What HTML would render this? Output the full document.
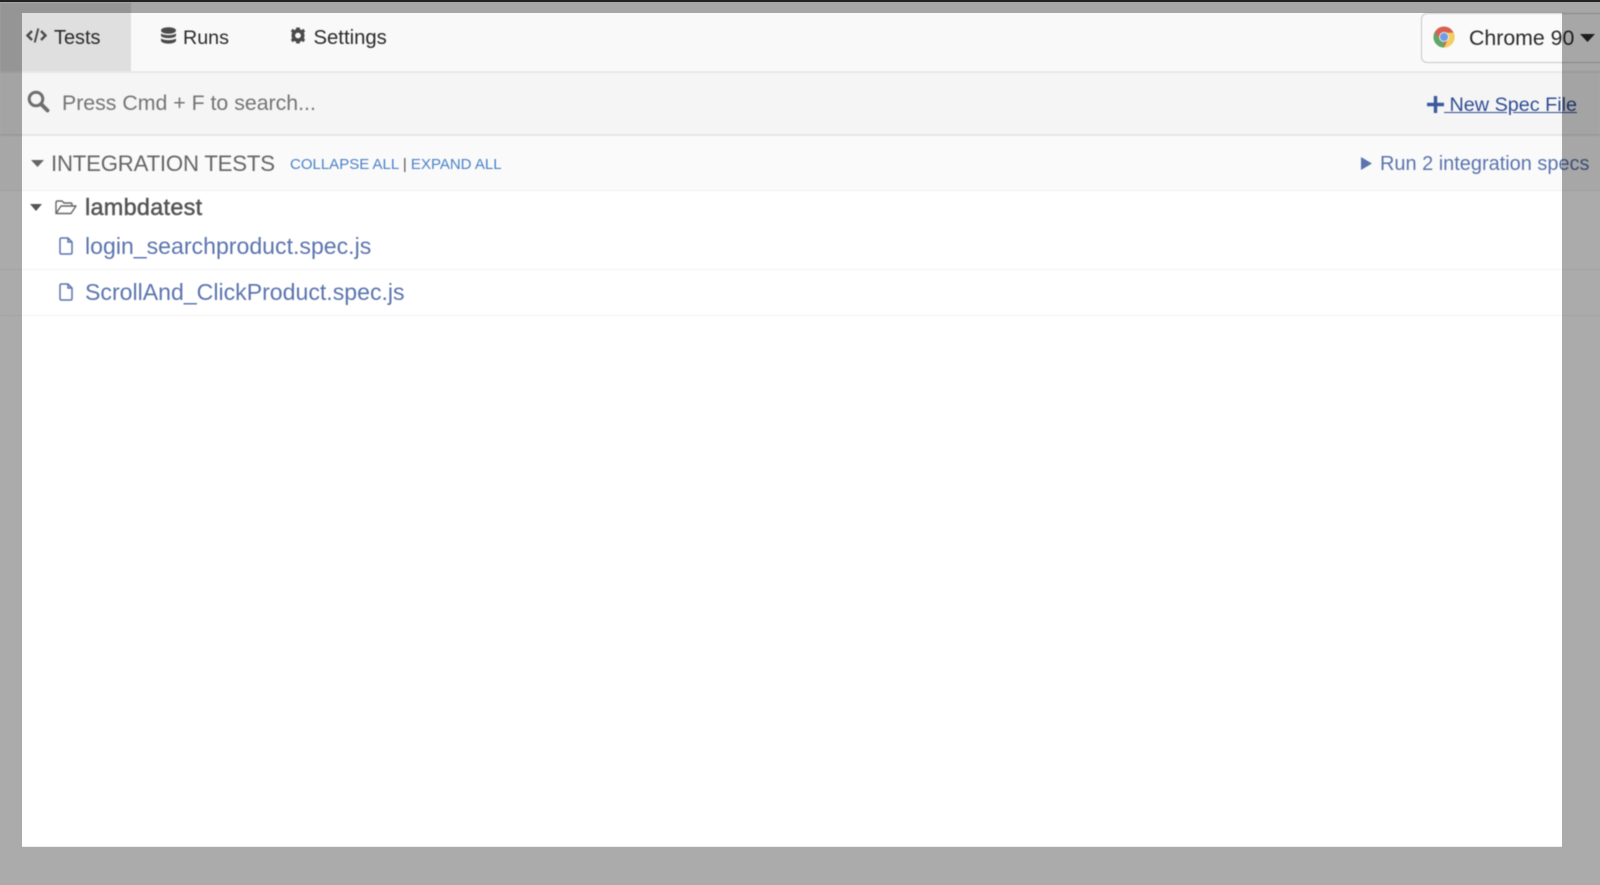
<!DOCTYPE html>
<html><head><meta charset="utf-8"><style>
html,body{margin:0;padding:0;width:1600px;height:885px;overflow:hidden;background:#fff;font-family:"Liberation Sans",sans-serif}
.a{position:absolute;white-space:nowrap;line-height:1}
svg{position:absolute;display:block}
.ov{position:absolute;background:#000;opacity:.33}
#c{position:absolute;left:0;top:0;width:1600px;height:885px;filter:blur(.4px)}
</style></head><body>
<div id="c">
<div class="a" style="left:0;top:0;width:1600px;height:73px;background:#f9f9f9"></div>
<div class="a" style="left:0;top:71px;width:1600px;height:2px;background:#e8e8e8"></div>
<div class="a" style="left:0;top:3px;width:131px;height:68px;background:#dfdfdf"></div>
<div class="a" style="left:0;top:73px;width:1600px;height:61px;background:#f5f5f5"></div>
<div class="a" style="left:0;top:134px;width:1600px;height:2px;background:#e6e6e6"></div>
<div class="a" style="left:0;top:136px;width:1600px;height:54px;background:#fafafa"></div>
<div class="a" style="left:0;top:190px;width:1600px;height:1px;background:#f0f0f0"></div>
<div class="a" style="left:0;top:269px;width:1600px;height:0;border-top:1px dotted #e6e6e6"></div>
<div class="a" style="left:0;top:315px;width:1600px;height:0;border-top:1px dotted #e6e6e6"></div>

<svg style="left:26px;top:27px" width="21" height="17" viewBox="0 0 21 17" fill="none" stroke="#4a4a4a" stroke-width="2.400"><path d="M6 4L1.500 8.500L6 13M15 4L19.500 8.500L15 13"/><path d="M12.300 1.500L8.700 15.500" stroke-width="2"/></svg>
<div class="a" style="left:54px;top:29px;font-size:19.900px;color:#2a2a2a">Tests</div>
<svg style="left:161px;top:27px" width="15" height="18" viewBox="0 0 15 18" fill="#4a4a4a"><ellipse cx="7.500" cy="3.500" rx="7.500" ry="3.300"/><path d="M0 6.200C2 8.700 13 8.700 15 6.200V9C13 11.800 2 11.800 0 9ZM0 11.300C2 13.800 13 13.800 15 11.300V14C13 17.500 2 17.500 0 14Z"/></svg>
<div class="a" style="left:183px;top:29px;font-size:19.700px;color:#2a2a2a">Runs</div>
<svg style="left:290px;top:27px" width="16" height="17" viewBox="0 0 16 17"><circle cx="8" cy="8.500" r="4.700" fill="none" stroke="#4a4a4a" stroke-width="3.600"/><path d="M6.300 0.500H9.700L10.200 3H5.800ZM6.300 16.500H9.700L10.200 14H5.800ZM0.800 4.500L2.500 1.800L5 3.500L3 6ZM15.200 4.500L13.500 1.800L11 3.500L13 6ZM0.800 12.500L2.500 15.200L5 13.500L3 11ZM15.200 12.500L13.500 15.200L11 13.500L13 11Z" fill="#4a4a4a"/></svg>
<div class="a" style="left:313.500px;top:28px;font-size:20.300px;color:#2a2a2a">Settings</div>

<div class="a" style="left:1421px;top:13px;width:200px;height:48px;border:1px solid #c8c8c8;border-radius:6px;background:#fafafa"></div>
<svg style="left:1433px;top:26px" width="22" height="22" viewBox="0 0 22 22"><circle cx="11" cy="11" r="10.500" fill="#d9604f"/><path d="M11 21.500A10.500 10.500 0 0 1 1.900 5.800L6.500 13.500L11 16Z" fill="#5ea868"/><path d="M11 21.500A10.500 10.500 0 0 0 20.600 6.800H11L15 13.500Z" fill="#f2cf5c"/><circle cx="11" cy="11" r="5" fill="#f4f4f4"/><circle cx="11" cy="11" r="4.100" fill="#6f9be8"/></svg>
<div class="a" style="left:1469px;top:28px;font-size:21.300px;color:#2a2a2a">Chrome 90</div>
<svg style="left:1580px;top:34px" width="15" height="8" viewBox="0 0 15 8"><path d="M0 0H15L7.500 8Z" fill="#2a2a2a"/></svg>

<svg style="left:27px;top:90px" width="23" height="23" viewBox="0 0 23 23" fill="none" stroke="#6e6e6e"><circle cx="9" cy="9" r="6.800" stroke-width="3"/><path d="M14 14L20.500 20.500" stroke-width="3.800" stroke-linecap="round"/></svg>
<div class="a" style="left:62px;top:93px;font-size:21.300px;color:#747474">Press Cmd + F to search...</div>
<svg style="left:1427px;top:96px" width="17" height="17" viewBox="0 0 17 17"><path d="M8.500 0V17M0 8.500H17" stroke="#3b5a9d" stroke-width="3.400"/></svg>
<div class="a" style="left:1444px;top:96px;font-size:19.800px;color:#2f4d94;text-decoration:underline;white-space:pre"> New Spec File</div>

<svg style="left:31px;top:160px" width="13" height="7" viewBox="0 0 13 7"><path d="M0 0H13L6.500 7Z" fill="#666"/></svg>
<div class="a" style="left:51px;top:153px;font-size:22.200px;letter-spacing:-.2px;color:#666">INTEGRATION TESTS</div>
<div class="a" style="left:290px;top:156.500px;font-size:15px;color:#4a80c8">COLLAPSE ALL <span style="color:#555">|</span> EXPAND ALL</div>
<svg style="left:1361px;top:157px" width="11" height="13" viewBox="0 0 11 13"><path d="M0 0L11 6.500L0 13Z" fill="#5b74ae"/></svg>
<div class="a" style="left:1380px;top:155px;font-size:19.950px;color:#5b74ae">Run 2 integration specs</div>

<svg style="left:30px;top:204px" width="12" height="7" viewBox="0 0 12 7"><path d="M0 0H12L6 7Z" fill="#555"/></svg>
<svg style="left:55px;top:200px" width="22" height="15" viewBox="0 0 22 15" fill="none" stroke="#666" stroke-width="1.400"><path d="M1 13.500V2.500Q1 1 2.500 1H7L9 3H16Q17 3 17 4.500V6"/><path d="M1 13.500H16L21 6H6Z" stroke-linejoin="round"/></svg>
<div class="a" style="left:85px;top:196px;font-size:23.400px;letter-spacing:.3px;color:#555;-webkit-text-stroke:.5px #555">lambdatest</div>

<svg style="left:59px;top:237px" width="14" height="18" viewBox="0 0 14 18" fill="none" stroke="#5b74ae" stroke-width="1.500"><path d="M1 2.500Q1 1 2.500 1H9L13 5V15.500Q13 17 11.500 17H2.500Q1 17 1 15.500Z"/><path d="M9 1V5H13"/></svg>
<div class="a" style="left:85px;top:235px;font-size:23.100px;color:#5b74ae">login_searchproduct.spec.js</div>
<svg style="left:59px;top:283px" width="14" height="18" viewBox="0 0 14 18" fill="none" stroke="#5b74ae" stroke-width="1.500"><path d="M1 2.500Q1 1 2.500 1H9L13 5V15.500Q13 17 11.500 17H2.500Q1 17 1 15.500Z"/><path d="M9 1V5H13"/></svg>
<div class="a" style="left:85px;top:281px;font-size:23.100px;color:#5b74ae">ScrollAnd_ClickProduct.spec.js</div>
</div>

<div class="ov" style="left:0;top:0;width:1600px;height:13px"></div>
<div class="ov" style="left:0;top:13px;width:22px;height:834px"></div>
<div class="ov" style="left:1562px;top:13px;width:38px;height:834px"></div>
<div class="ov" style="left:0;top:847px;width:1600px;height:38px"></div>
<div class="a" style="left:0;top:0;width:1600px;height:2px;background:#222"></div>
<div class="a" style="left:22px;top:846px;width:1540px;height:1px;background:#eee"></div>
</body></html>
